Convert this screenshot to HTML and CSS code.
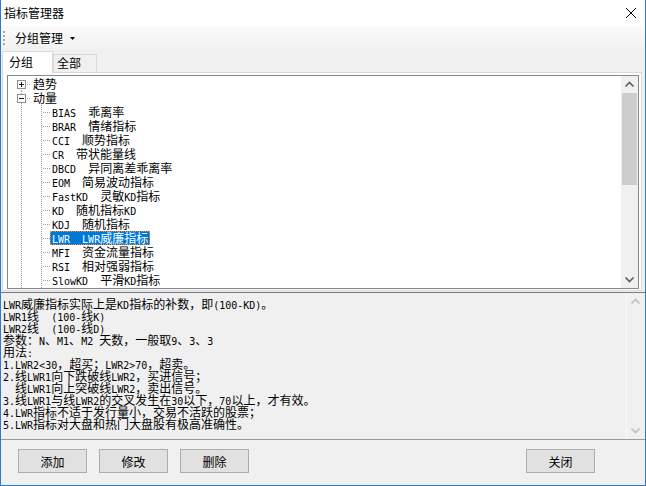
FILE: index.html
```html
<!DOCTYPE html>
<html lang="zh-CN">
<head>
<meta charset="utf-8">
<title>指标管理器</title>
<link rel="stylesheet" href="styles.css">
</head>
<body>
<div class="window">
  <div class="titlebar">
    <span class="title">指标管理器</span>
    <span class="close"><svg width="10" height="10" viewBox="0 0 10 10"><path d="M0 0L10 10M10 0L0 10" stroke="#000" stroke-width="1"/></svg></span>
  </div>
  <div class="toolbar">
    <span class="grip"></span>
    <span class="menu">分组管理</span>
    <svg class="caret" width="5" height="3" viewBox="0 0 5 3"><path d="M0 0H5L2.5 3Z" fill="#000"/></svg>
  </div>
  <div class="tabs">
    <div class="tab active">分组</div>
    <div class="tab">全部</div>
  </div>
  <div class="panel">
    <div class="tree">
      <div class="tree-body">
        <div class="row"><span class="g rt first"><svg class="box" width="9" height="9" viewBox="0 0 9 9"><rect x="0.5" y="0.5" width="8" height="8" fill="#fff" stroke="#919191"/><path d="M2 4.5H7M4.5 2V7" stroke="#1a1a1a"/></svg></span><span class="lbl">趋势</span></div>
        <div class="row"><span class="g rt"><svg class="box" width="9" height="9" viewBox="0 0 9 9"><rect x="0.5" y="0.5" width="8" height="8" fill="#fff" stroke="#919191"/><path d="M2 4.5H7" stroke="#1a1a1a"/></svg></span><span class="lbl">动量</span></div>
        <div class="row"><span class="g vl"></span><span class="g tee"></span><span class="lbl"><span class="m">BIAS  </span>乖离率</span></div>
        <div class="row"><span class="g vl"></span><span class="g tee"></span><span class="lbl"><span class="m">BRAR  </span>情绪指标</span></div>
        <div class="row"><span class="g vl"></span><span class="g tee"></span><span class="lbl"><span class="m">CCI  </span>顺势指标</span></div>
        <div class="row"><span class="g vl"></span><span class="g tee"></span><span class="lbl"><span class="m">CR  </span>带状能量线</span></div>
        <div class="row"><span class="g vl"></span><span class="g tee"></span><span class="lbl"><span class="m">DBCD  </span>异同离差乖离率</span></div>
        <div class="row"><span class="g vl"></span><span class="g tee"></span><span class="lbl"><span class="m">EOM  </span>简易波动指标</span></div>
        <div class="row"><span class="g vl"></span><span class="g tee"></span><span class="lbl"><span class="m">FastKD  </span>灵敏<span class="m">KD</span>指标</span></div>
        <div class="row"><span class="g vl"></span><span class="g tee"></span><span class="lbl"><span class="m">KD  </span>随机指标<span class="m">KD</span></span></div>
        <div class="row"><span class="g vl"></span><span class="g tee"></span><span class="lbl"><span class="m">KDJ  </span>随机指标</span></div>
        <div class="row"><span class="g vl"></span><span class="g tee"></span><span class="lbl sel"><span class="m">LWR  LWR</span>威廉指标</span></div>
        <div class="row"><span class="g vl"></span><span class="g tee"></span><span class="lbl"><span class="m">MFI  </span>资金流量指标</span></div>
        <div class="row"><span class="g vl"></span><span class="g tee"></span><span class="lbl"><span class="m">RSI  </span>相对强弱指标</span></div>
        <div class="row"><span class="g vl"></span><span class="g tee"></span><span class="lbl"><span class="m">SlowKD  </span>平滑<span class="m">KD</span>指标</span></div>
        <div class="row"><span class="g vl"></span><span class="g vl2"></span></div>
      </div>
      <div class="vscroll">
        <span class="arrow"><svg width="17" height="17" viewBox="0 0 17 17"><path d="M4.5 10.5L8.5 6.5L12.5 10.5" fill="none" stroke="#606060" stroke-width="1.7"/></svg></span>
        <span class="thumb"></span>
        <span class="track"></span>
        <span class="arrow"><svg width="17" height="17" viewBox="0 0 17 17"><path d="M4.5 6.5L8.5 10.5L12.5 6.5" fill="none" stroke="#606060" stroke-width="1.7"/></svg></span>
      </div>
    </div>
  </div>
  <div class="desc">
    <div class="desc-text"><div><span class="m">LWR</span>威廉指标实际上是<span class="m">KD</span>指标的补数，即<span class="m">(100-KD)</span>。</div><div><span class="m">LWR1</span>线<span class="m">  (100-</span>线<span class="m">K)</span></div><div><span class="m">LWR2</span>线<span class="m">  (100-</span>线<span class="m">D)</span></div><div>参数：<span class="m">N</span>、<span class="m">M1</span>、<span class="m">M2 </span>天数，一般取<span class="m">9</span>、<span class="m">3</span>、<span class="m">3</span></div><div>用法<span class="m">:</span></div><div><span class="m">1.LWR2&lt;30</span>，超买；<span class="m">LWR2&gt;70</span>，超卖。</div><div><span class="m">2.</span>线<span class="m">LWR1</span>向下跌破线<span class="m">LWR2</span>，买进信号；</div><div><span class="m">  </span>线<span class="m">LWR1</span>向上突破线<span class="m">LWR2</span>，卖出信号。</div><div><span class="m">3.</span>线<span class="m">LWR1</span>与线<span class="m">LWR2</span>的交叉发生在<span class="m">30</span>以下，<span class="m">70</span>以上，才有效。</div><div><span class="m">4.LWR</span>指标不适于发行量小，交易不活跃的股票；</div><div><span class="m">5.LWR</span>指标对大盘和热门大盘股有极高准确性。</div></div>
    <div class="vscroll2">
      <span class="arrow"><svg width="17" height="17" viewBox="0 0 17 17"><path d="M4.5 10.5L8.5 6.5L12.5 10.5" fill="none" stroke="#bfbfbf" stroke-width="1.7"/></svg></span>
      <span class="track"></span>
      <span class="arrow"><svg width="17" height="17" viewBox="0 0 17 17"><path d="M4.5 6.5L8.5 10.5L12.5 6.5" fill="none" stroke="#bfbfbf" stroke-width="1.7"/></svg></span>
    </div>
  </div>
  <div class="buttons">
    <button class="btn">添加</button>
    <button class="btn">修改</button>
    <button class="btn">删除</button>
    <button class="btn btn-close">关闭</button>
  </div>
</div>
</body>
</html>
```
FILE: styles.css
```css
* { box-sizing: border-box; }
html, body { margin: 0; padding: 0; background: #fff; }
body {
  font-family: "Noto Sans CJK SC", "Noto Sans", sans-serif;
  font-size: 12px;
  color: #000;
}
.window {
  width: 646px;
  height: 486px;
  border: 1px solid #2b79d0;
  border-top: none;
  background: #f0f0f0;
  display: flex;
  flex-direction: column;
  overflow: hidden;
}
.titlebar {
  flex: none;
  height: 26px;
  background: #fff;
  display: flex;
  align-items: center;
  padding-left: 3px;
}
.title { flex: 1; line-height: 26px; }
.close {
  width: 28px;
  height: 26px;
  display: flex;
  align-items: center;
  justify-content: center;
}
.close svg { display: block; }
.toolbar {
  flex: none;
  height: 24px;
  display: flex;
  align-items: center;
  padding-left: 2px;
  background: linear-gradient(#fbfbfb, #f1f1f1);
}
.grip {
  width: 2px;
  height: 14px;
  background: repeating-linear-gradient(to bottom, #a8a8a8 0 2px, transparent 2px 4px);
  margin-right: 10px;
}
.menu { line-height: 24px; }
.caret { margin-left: 7px; display: block; }
.tabs {
  flex: none;
  height: 22px;
  display: flex;
  align-items: flex-start;
  padding-left: 1px;
  background: #f0f0f0;
}
.tab {
  height: 18px;
  margin-top: 4px;
  width: 44px;
  padding-left: 3px;
  border: 1px solid #d9d9d9;
  border-bottom: none;
  background: #f0f0f0;
  line-height: 16px;
}
.tab.active {
  position: relative;
  z-index: 1;
  height: 23px;
  margin-top: 1px;
  width: 51px;
  padding-left: 6px;
  background: #fff;
  line-height: 20px;
}
.panel {
  flex: none;
  height: 219px;
  margin: 0 3px 0 1px;
  border: 1px solid #d9d9d9;
  background: #fff;
  padding: 2px 2px 1px 4px;
  display: flex;
}
.tree {
  flex: 1;
  border: 1px solid #828790;
  background: #fff;
  display: flex;
  overflow: hidden;
}
.tree-body {
  flex: 1;
  padding-top: 1px;
  overflow: hidden;
}
.row {
  display: flex;
  height: 14px;
}
.g { flex: none; height: 14px; }
.rt {
  width: 23px;
  display: flex;
  align-items: center;
  padding-left: 9px;
  background:
    repeating-linear-gradient(to bottom, #a0a0a0 0 1px, transparent 1px 2px) 13px 0 / 1px 14px no-repeat,
    repeating-linear-gradient(to right, #a0a0a0 0 1px, transparent 1px 2px) 19px 7px / 4px 1px no-repeat;
}
.rt.first {
  background:
    repeating-linear-gradient(to bottom, #a0a0a0 0 1px, transparent 1px 2px) 13px 7px / 1px 7px no-repeat,
    repeating-linear-gradient(to right, #a0a0a0 0 1px, transparent 1px 2px) 19px 7px / 4px 1px no-repeat;
}
.box { display: block; }
.vl {
  width: 20px;
  background: repeating-linear-gradient(to bottom, #a0a0a0 0 1px, transparent 1px 2px) 13px 0 / 1px 14px no-repeat;
}
.vl2 {
  width: 22px;
  background: repeating-linear-gradient(to bottom, #a0a0a0 0 1px, transparent 1px 2px) 13px 0 / 1px 14px no-repeat;
}
.tee {
  width: 22px;
  background:
    repeating-linear-gradient(to bottom, #a0a0a0 0 1px, transparent 1px 2px) 13px 0 / 1px 14px no-repeat,
    repeating-linear-gradient(to right, #a0a0a0 0 1px, transparent 1px 2px) 15px 7px / 7px 1px no-repeat;
}
.lbl {
  height: 14px;
  line-height: 14px;
  padding: 0 2px;
  white-space: pre;
}
.lbl.sel {
  background: #0078d7;
  color: #fff;
  outline: 1px dotted #ff8a2a;
  outline-offset: -1px;
}
.m {
  font-family: "DejaVu Sans Mono", "Liberation Mono", monospace;
  font-size: 10px;
}
.vscroll {
  flex: none;
  width: 17px;
  background: #f0f0f0;
  display: flex;
  flex-direction: column;
}
.arrow { flex: none; height: 17px; display: block; }
.arrow svg { display: block; }
.thumb {
  flex: none;
  height: 92px;
  margin: 0 1px;
  background: #cdcdcd;
}
.track { flex: 1; }
.desc {
  flex: none;
  height: 148px;
  margin-top: 1px;
  border-top: 1px solid #7a7a7a;
  border-bottom: 1px solid #9a9a9a;
  display: flex;
}
.desc-text {
  flex: 1;
  padding: 5px 0 0 2px;
  overflow: hidden;
}
.desc-text div {
  height: 12px;
  line-height: 12px;
  white-space: pre;
}
.vscroll2 {
  flex: none;
  width: 18px;
  margin-right: 1px;
  border-left: 1px solid #fafafa;
  display: flex;
  flex-direction: column;
}
.buttons {
  flex: 1;
  display: flex;
  align-items: flex-start;
  gap: 12px;
  padding: 9px 50px 0 17px;
}
.btn {
  width: 69px;
  height: 24px;
  margin: 0;
  padding: 0;
  border: 1px solid #adadad;
  background: #e1e1e1;
  font-family: "Noto Sans CJK SC", "Noto Sans", sans-serif;
  font-size: 12px;
  color: #000;
  display: flex;
  align-items: center;
  justify-content: center;
}
.btn-close { margin-left: auto; }
```
